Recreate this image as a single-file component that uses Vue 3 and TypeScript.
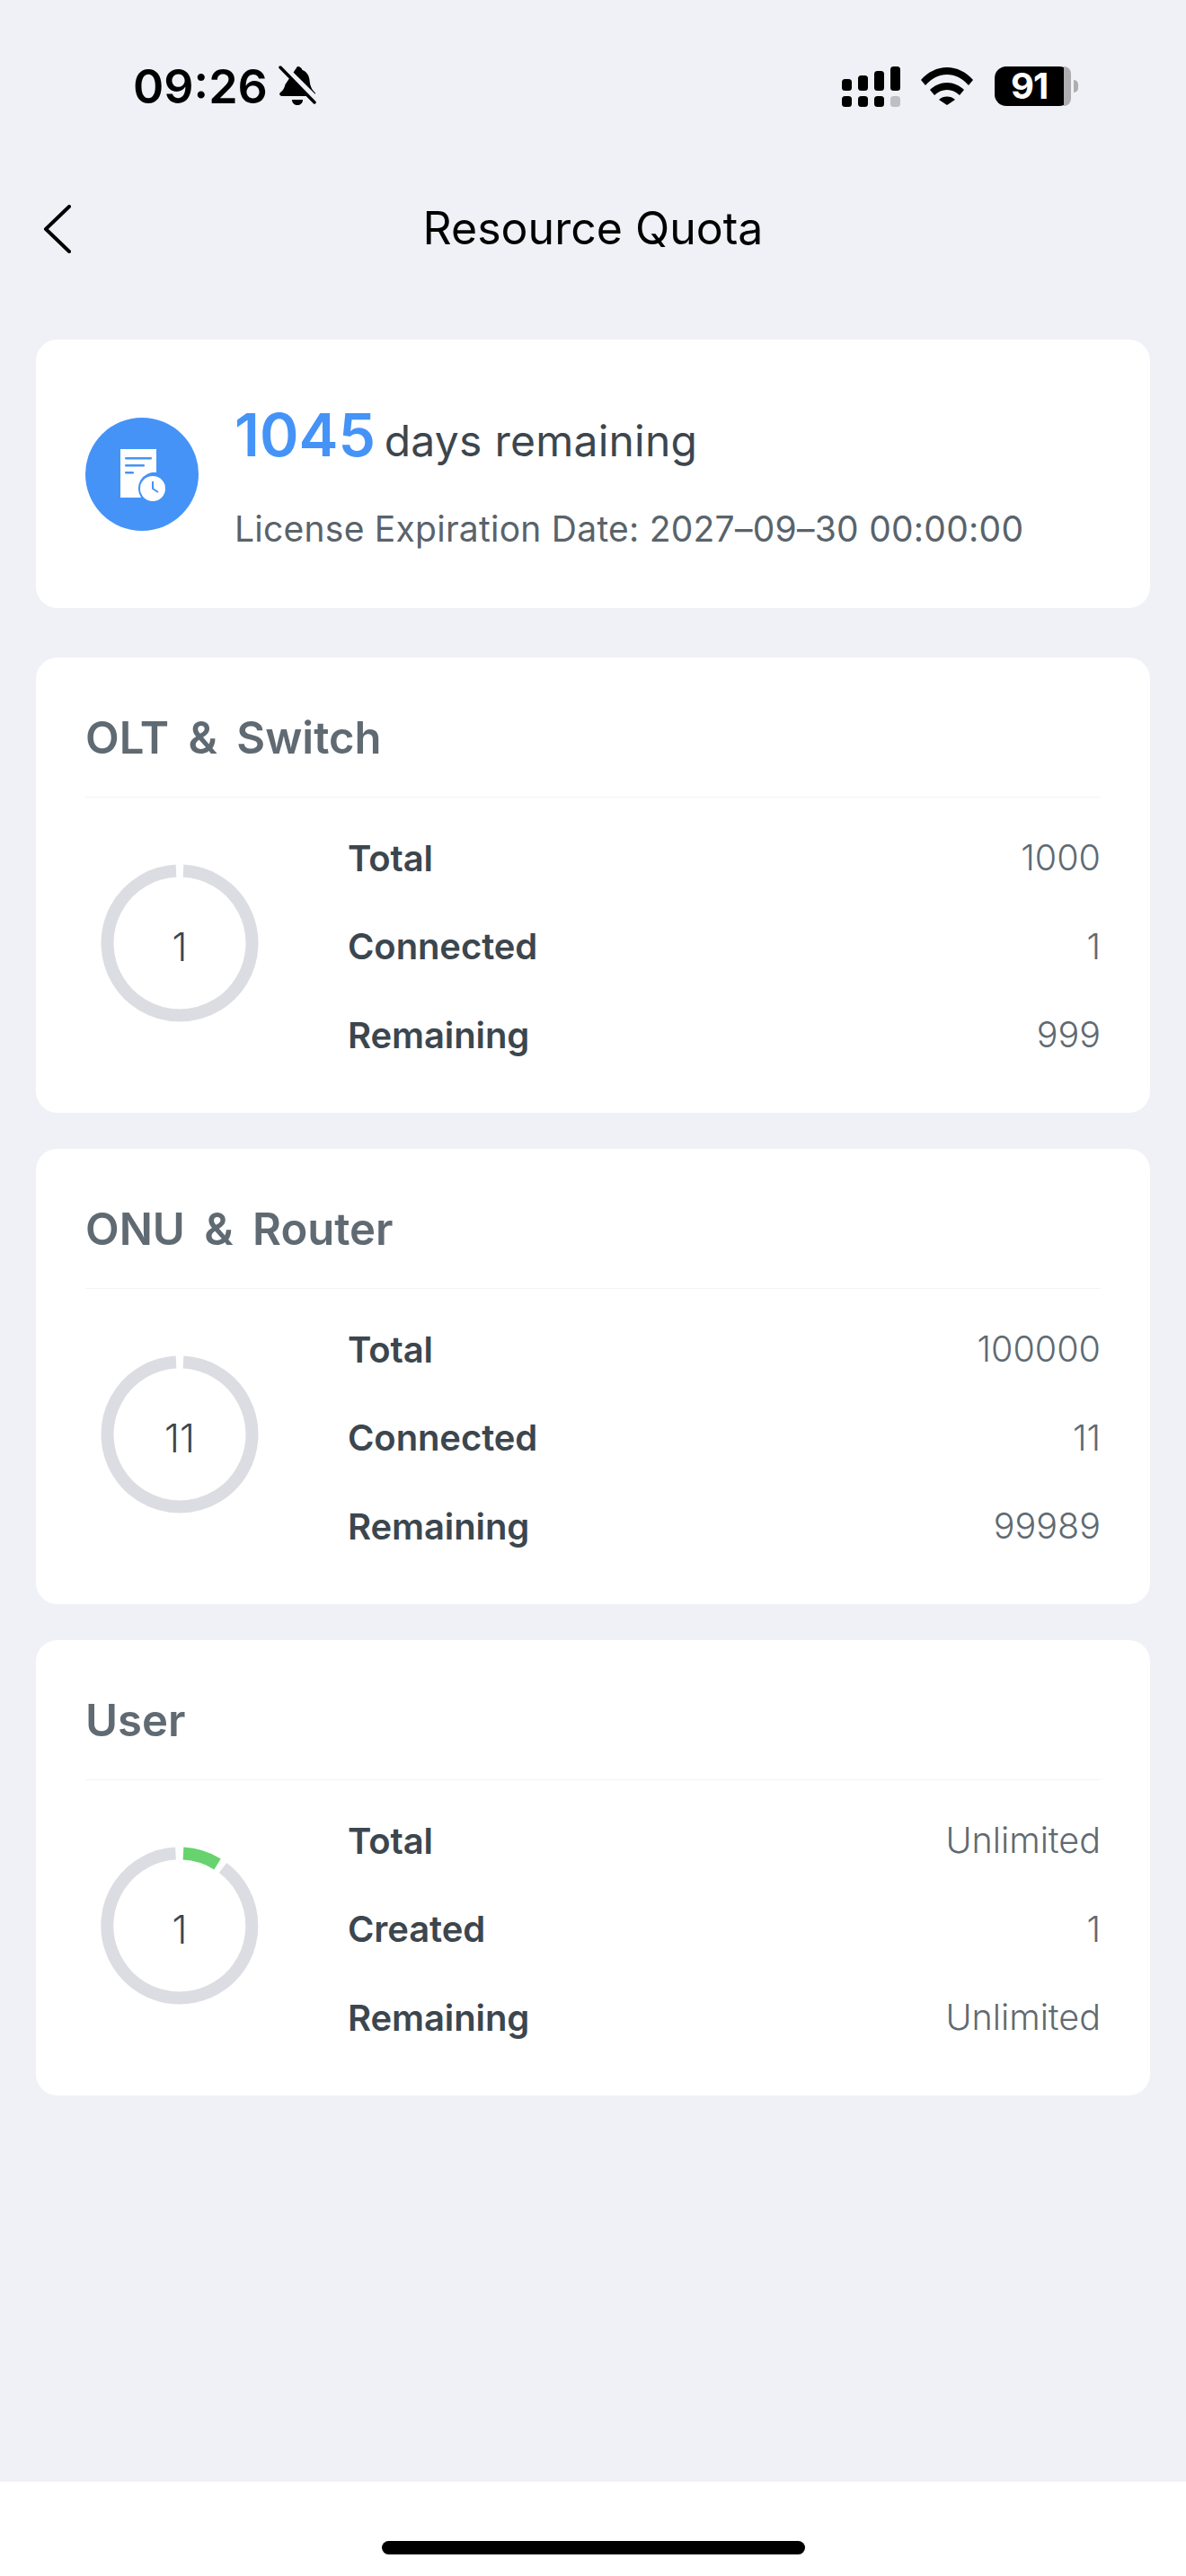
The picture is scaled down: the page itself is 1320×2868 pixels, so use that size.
<script setup lang="ts">
interface Row {
  label: string
  value: string
}

interface QuotaCard {
  title: string
  count: string
  used: boolean
  rows: Row[]
}

const cards: QuotaCard[] = [
  {
    title: 'OLT & Switch',
    count: '1',
    used: false,
    rows: [
      { label: 'Total', value: '1000' },
      { label: 'Connected', value: '1' },
      { label: 'Remaining', value: '999' },
    ],
  },
  {
    title: 'ONU & Router',
    count: '11',
    used: false,
    rows: [
      { label: 'Total', value: '100000' },
      { label: 'Connected', value: '11' },
      { label: 'Remaining', value: '99989' },
    ],
  },
  {
    title: 'User',
    count: '1',
    used: true,
    rows: [
      { label: 'Total', value: 'Unlimited' },
      { label: 'Created', value: '1' },
      { label: 'Remaining', value: 'Unlimited' },
    ],
  },
]

const signalBars = [
  { x: 0, y: 14, h: 13 },
  { x: 18, y: 10, h: 17 },
  { x: 36, y: 5, h: 22 },
  { x: 54, y: 0, h: 27 },
]
const signalDots = [0, 18, 36, 54]
</script>

<template>
  <div class="page">
    <div class="status">
      <div class="status-left">
        <span class="time">09:26</span>
        <svg class="bell" width="42" height="46" viewBox="0 0 42 46">
          <path d="M21 1c3 0 5 2 5.500 4 5 2 7.500 6 8 11 .5 6 2 10 6 14 1 1.500 .5 4-2 4H4c-3 0-3.500-3-2-4 3-2 4.500-5 5.500-9z" fill="#000" />
          <path d="M15 38h12c0 4-3 6-6 6s-6-2-6-6z" fill="#000" />
          <path d="M3 -1L42 38" stroke="#f0f1f6" stroke-width="7" />
          <path d="M2 2L40 41" stroke="#000" stroke-width="3.500" stroke-linecap="round" />
        </svg>
      </div>
      <div class="status-right">
        <svg width="66" height="45" viewBox="0 0 66 45">
          <rect v-for="b in signalBars" :key="b.x" :x="b.x" :y="b.y" width="11" :height="b.h" rx="3.500" fill="#000" />
          <rect v-for="x in signalDots" :key="x" :x="x" y="33" width="11" height="12" rx="3.500" :fill="x === 54 ? '#bfbfc3' : '#000'" />
        </svg>
        <svg class="wifi" width="58" height="42" viewBox="0 0 58 42">
          <path d="M0 14C8 5 18 0 29 0s21 5 29 14l-5 6C46 12 38 8 29 8s-17 4-24 12z" fill="#000" />
          <path d="M10 25c5-5 12-8 19-8s14 3 19 8l-5 6c-4-4-9-6-14-6s-10 2-14 6z" fill="#000" />
          <path d="M20 36c2.500-2.500 5.500-3.500 9-3.500s6.500 1 9 3.500l-9 6z" fill="#000" />
        </svg>
        <div class="battery">
          <div class="battery-body">
            <span class="battery-num">91</span>
            <i class="battery-rest"></i>
          </div>
          <i class="battery-cap"></i>
        </div>
      </div>
    </div>

    <div class="nav">
      <svg class="back" width="32" height="54" viewBox="0 0 32 54">
        <path d="M29 2L3 27l26 25" fill="none" stroke="#000" stroke-width="4" stroke-linecap="round" stroke-linejoin="round" />
      </svg>
      <span class="nav-title">Resource Quota</span>
    </div>

    <div class="list">
      <section class="card license">
        <div class="license-icon">
          <svg width="126" height="126" viewBox="0 0 126 126">
            <path d="M39 35h40v26a18 18 0 0 0-17 28H39z" fill="#fff" />
            <rect x="44" y="44" width="30" height="2.500" rx="1.250" fill="#4593f7" />
            <rect x="44" y="52" width="22" height="2.500" rx="1.250" fill="#4593f7" />
            <rect x="44" y="60" width="10" height="2.500" rx="1.250" fill="#4593f7" />
            <circle cx="75" cy="79" r="14" fill="#fff" />
            <path d="M75 71v8l6 4" fill="none" stroke="#4593f7" stroke-width="2" />
          </svg>
        </div>
        <div class="license-text">
          <div class="remaining"><b>1045</b> days remaining</div>
          <div class="expiry">License Expiration Date: 2027–09–30 00:00:00</div>
        </div>
      </section>

      <section v-for="card in cards" :key="card.title" class="card quota">
        <h2 class="quota-title">{{ card.title }}</h2>
        <div class="quota-body">
          <div class="ring">
            <svg width="176" height="176" viewBox="0 0 176 176">
              <template v-if="card.used">
                <path d="M83.500 7.600A80.500 80.500 0 1 0 136 23.500" fill="none" stroke="#dcdde3" stroke-width="14" />
                <path d="M92 7.600A80.500 80.500 0 0 1 130 19.500" fill="none" stroke="#66d36e" stroke-width="14" />
              </template>
              <path v-else d="M92 7.600A80.500 80.500 0 1 1 84 7.600" fill="none" stroke="#dcdde3" stroke-width="14" />
            </svg>
            <span class="ring-num">{{ card.count }}</span>
          </div>
          <div class="rows">
            <div v-for="row in card.rows" :key="row.label" class="row">
              <span class="row-label">{{ row.label }}</span>
              <span class="row-value">{{ row.value }}</span>
            </div>
          </div>
        </div>
      </section>
    </div>

    <div class="home">
      <i class="home-bar"></i>
    </div>
  </div>
</template>

<style>
html,
body {
  margin: 0;
  background: #f0f1f6;
}
</style>

<style scoped>
.page {
  position: relative;
  display: flex;
  flex-direction: column;
  height: 2868px;
  background: #f0f1f6;
  font-family: Inter, "Liberation Sans", sans-serif;
  color: #3c464e;
  overflow: hidden;
}

.status {
  display: flex;
  justify-content: space-between;
  align-items: center;
  height: 72px;
  padding: 60px 120px 0 148px;
}

.status-left,
.status-right {
  display: flex;
  align-items: center;
}

.time {
  font-size: 52px;
  font-weight: 600;
  color: #000;
}

.bell {
  margin-left: 12px;
}

.wifi {
  margin-left: 22px;
}

.battery {
  display: flex;
  align-items: center;
  margin-left: 24px;
}

.battery-body {
  position: relative;
  width: 85px;
  height: 44px;
  border-radius: 13px;
  background: #000;
  display: flex;
  align-items: center;
  padding-left: 18px;
  box-sizing: border-box;
}

.battery-num {
  font-size: 40px;
  font-weight: 700;
  letter-spacing: -1px;
  color: #fff;
  line-height: 44px;
}

.battery-rest {
  position: absolute;
  right: 0;
  top: 0;
  bottom: 0;
  width: 8px;
  background: #aeaeb0;
  border-radius: 0 13px 13px 0;
}

.battery-cap {
  width: 5px;
  height: 14px;
  margin-left: 3px;
  background: #aeaeb0;
  border-radius: 0 5px 5px 0;
}

.nav {
  position: relative;
  display: flex;
  align-items: center;
  justify-content: center;
  height: 84px;
  margin-top: 80px;
}

.back {
  position: absolute;
  left: 48px;
  top: 16px;
}

.nav-title {
  font-size: 50px;
  color: #000;
}

.list {
  display: flex;
  flex-direction: column;
  padding: 0 40px;
  margin-top: 82px;
}

.card {
  background: #fff;
  border-radius: 24px;
}

.license {
  display: flex;
  align-items: center;
  height: 299px;
  padding-left: 55px;
  box-sizing: border-box;
  margin-bottom: 55px;
}

.license-icon {
  width: 126px;
  height: 126px;
  border-radius: 50%;
  background: #4593f7;
  flex: none;
}

.license-icon svg {
  display: block;
}

.license-text {
  margin-left: 40px;
}

.remaining {
  font-size: 48px;
  line-height: 80px;
  letter-spacing: 0.25px;
}

.remaining b {
  font-size: 66px;
  font-weight: 600;
  letter-spacing: 0;
  color: #4593f7;
  margin-right: -4px;
}

.expiry {
  margin-top: 34px;
  font-size: 39px;
  letter-spacing: 0.25px;
  color: #59636b;
}

.quota {
  height: 507px;
  padding: 0 55px;
  box-sizing: border-box;
  margin-bottom: 40px;
}

.quota-title {
  margin: 0;
  height: 156px;
  line-height: 180px;
  font-size: 49px;
  font-weight: 600;
  word-spacing: 9px;
  color: #5f6a72;
  border-bottom: 1px solid #f3f4f6;
  box-sizing: border-box;
}

.quota-body {
  display: flex;
  align-items: flex-start;
}

.ring {
  position: relative;
  width: 176px;
  height: 176px;
  margin: 74px 0 0 17px;
  flex: none;
}

.ring-num {
  position: absolute;
  inset: 7px 0 0;
  display: flex;
  align-items: center;
  justify-content: center;
  font-size: 43px;
  font-weight: 300;
}

.rows {
  flex: 1;
  margin: 18px 0 0 99px;
}

.row {
  display: flex;
  justify-content: space-between;
  align-items: center;
  height: 98.500px;
}

.row-label {
  font-size: 40px;
  font-weight: 600;
  letter-spacing: -0.1px;
}

.row-value {
  font-size: 39.500px;
  font-weight: 300;
  color: #5f6a72;
}

.home {
  position: absolute;
  left: 0;
  right: 0;
  bottom: 0;
  height: 105px;
  background: #fff;
}

.home-bar {
  position: absolute;
  left: 425px;
  top: 66px;
  width: 471px;
  height: 15px;
  border-radius: 8px;
  background: #000;
}
</style>
